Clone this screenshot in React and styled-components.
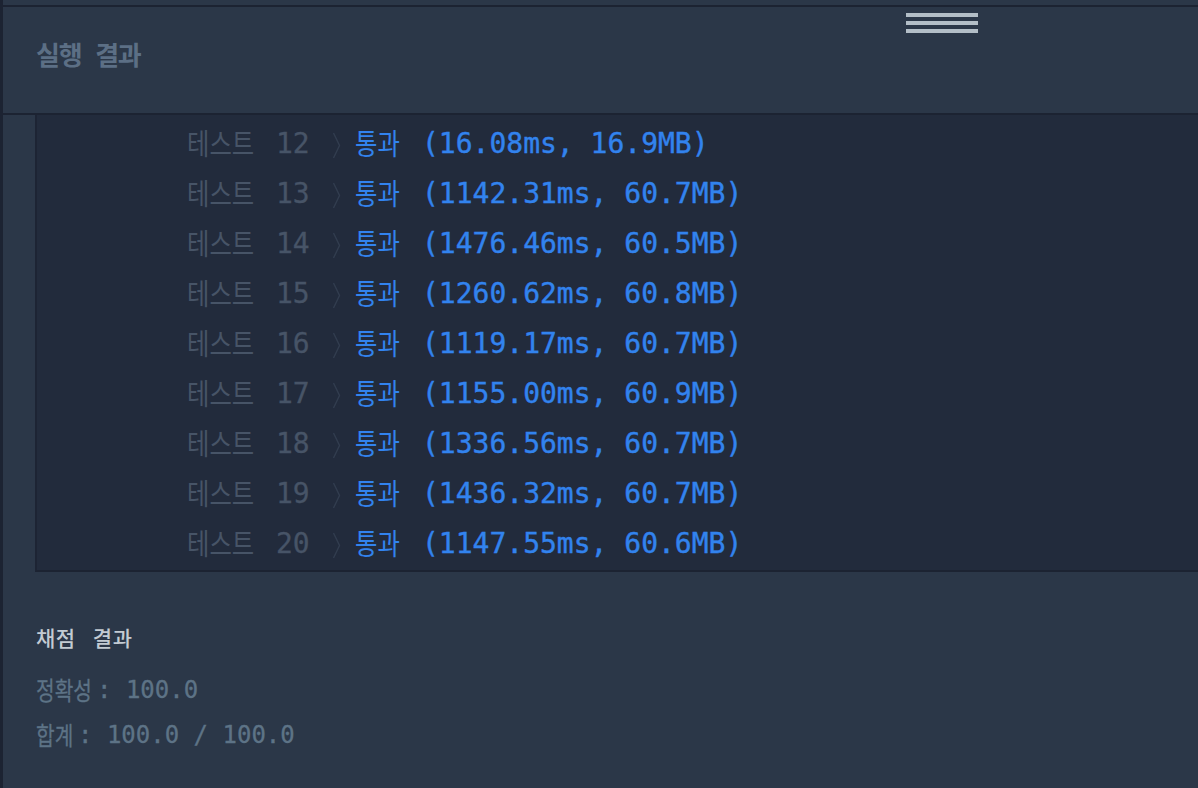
import React from "react";
import styled, { createGlobalStyle } from "styled-components";

const rows = [
  [12, "16.08ms, 16.9MB"],
  [13, "1142.31ms, 60.7MB"],
  [14, "1476.46ms, 60.5MB"],
  [15, "1260.62ms, 60.8MB"],
  [16, "1119.17ms, 60.7MB"],
  [17, "1155.00ms, 60.9MB"],
  [18, "1336.56ms, 60.7MB"],
  [19, "1436.32ms, 60.7MB"],
  [20, "1147.55ms, 60.6MB"],
];

function App() {
  return (
    <Page>
      <GlobalStyle />
      <Grip>
        <GripBar />
        <GripBar />
        <GripBar />
      </Grip>
      <Header>
        <Title>실행 결과</Title>
      </Header>
      <Panel>
        {rows.map(([no, result]) => (
          <Row key={no}>
            <Cell $w={89}>
              <Hangul $size={29} $sx={0.84} $color="#475467">
                테스트
              </Hangul>
            </Cell>
            <Num>{no}</Num>
            <Chevron>
              <svg width="9" height="27" viewBox="0 0 9 27">
                <polyline
                  points="1.5,1 7.5,13.5 1.5,26"
                  fill="none"
                  stroke="#323d4f"
                  strokeWidth="1.4"
                />
              </svg>
            </Chevron>
            <Cell $w={67}>
              <Hangul $size={29} $sx={0.84} $color="#3283ee">
                통과
              </Hangul>
            </Cell>
            <Result>({result})</Result>
          </Row>
        ))}
      </Panel>
      <Score>
        <ScoreTitle>채점 결과</ScoreTitle>
        <ScoreLine $top={22}>
          <Cell $w={61}>
            <Hangul $size={25} $sx={0.81} $color="#5d7386">
              정확성
            </Hangul>
          </Cell>
          : 100.0
        </ScoreLine>
        <ScoreLine $top={14}>
          <Cell $w={42}>
            <Hangul $size={25} $sx={0.81} $color="#5d7386">
              합계
            </Hangul>
          </Cell>
          : 100.0 / 100.0
        </ScoreLine>
      </Score>
    </Page>
  );
}

const GlobalStyle = createGlobalStyle`
  html, body {
    margin: 0;
    padding: 0;
    background: #2b3748;
  }
  * {
    box-sizing: border-box;
  }
`;

// 전체 화면
const Page = styled.div`
  position: relative;
  width: 1198px;
  height: 788px;
  overflow: hidden;
  padding-top: 5px;
  background: #2b3748;
  border-left: 3px solid #1c2332;
  font-family: "DejaVu Sans Mono", "Noto Sans CJK KR", monospace;
`;

// 패널 크기 조절 손잡이
const Grip = styled.div`
  position: absolute;
  left: 903px;
  top: 13px;
  display: flex;
  flex-direction: column;
  gap: 4px;
`;

const GripBar = styled.div`
  width: 72px;
  height: 4px;
  background: #b3bec7;
`;

// 실행 결과 헤더
const Header = styled.div`
  height: 110px;
  padding: 32px 0 0 33px;
  border-top: 2px solid #1c2332;
  border-bottom: 2px solid #1c2332;
`;

const Title = styled.div`
  font-family: "Noto Sans CJK KR", sans-serif;
  font-weight: 700;
  font-size: 26px;
  line-height: 30px;
  color: #5c6f85;
  letter-spacing: -1.2px;
  word-spacing: 9px;
`;

// 테스트 결과 목록
const Panel = styled.div`
  margin-left: 32px;
  height: 457px;
  padding-top: 2px;
  overflow: hidden;
  background: #222b3c;
  border-left: 2px solid #1d2434;
  border-bottom: 2px solid #1c2332;
`;

const Row = styled.div`
  height: 50px;
  line-height: 50px;
  padding-left: 150px;
  white-space: nowrap;
  font-size: 28px;
`;

const Cell = styled.span`
  display: inline-block;
  width: ${(p) => p.$w}px;
  white-space: nowrap;
`;

const Hangul = styled.span`
  display: inline-block;
  font-family: "Noto Sans CJK KR", sans-serif;
  font-size: ${(p) => p.$size}px;
  color: ${(p) => p.$color};
  transform: scaleX(${(p) => p.$sx});
  transform-origin: left center;
  vertical-align: -2px;
`;

const Num = styled.span`
  display: inline-block;
  width: 34px;
  color: #475467;
  -webkit-text-stroke: 0.3px #475467;
`;

const Chevron = styled.span`
  display: inline-block;
  width: 45px;
  padding-left: 22px;
  vertical-align: -6px;
  line-height: 0;

  svg {
    display: block;
  }
`;

const Result = styled.span`
  color: #3283ee;
  -webkit-text-stroke: 0.4px #3283ee;
`;

// 채점 결과
const Score = styled.div`
  padding: 50px 0 0 33px;
`;

const ScoreTitle = styled.div`
  font-family: "Noto Sans CJK KR", sans-serif;
  font-weight: 500;
  font-size: 21px;
  line-height: 30px;
  color: #c3cbd3;
  letter-spacing: 0.5px;
  word-spacing: 12px;
`;

const ScoreLine = styled.div`
  margin-top: ${(p) => p.$top}px;
  font-size: 24px;
  line-height: 30px;
  color: #5d7386;
  -webkit-text-stroke: 0.3px #5d7386;
  white-space: nowrap;
`;

export default App;
